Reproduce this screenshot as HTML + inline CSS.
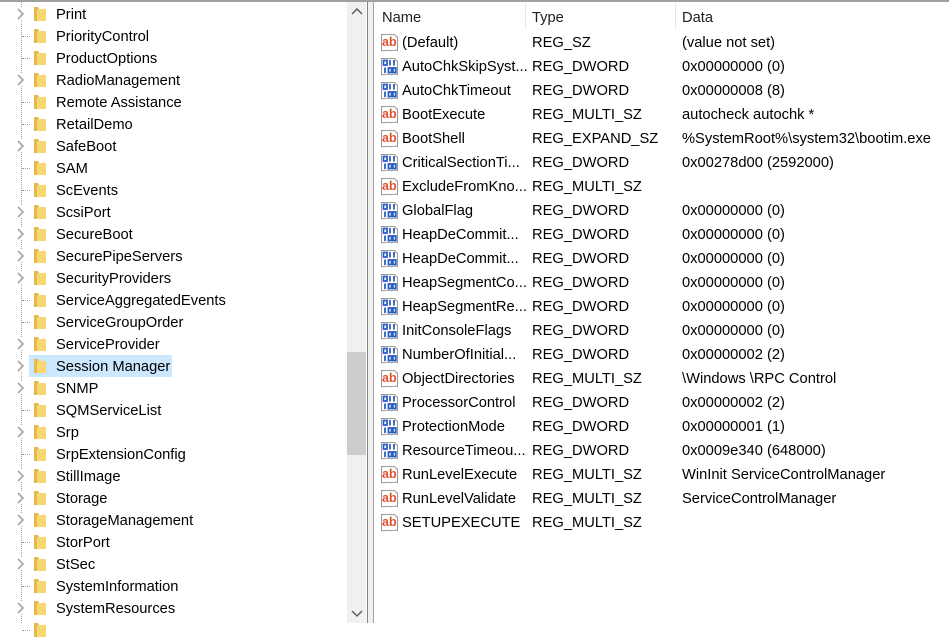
<!DOCTYPE html>
<html><head><meta charset="utf-8"><style>
*{margin:0;padding:0;box-sizing:border-box}
body{width:949px;height:623px;overflow:hidden;background:#fff;font-family:"Liberation Sans",sans-serif;font-size:14.7px;color:#000;position:relative}
.top{position:absolute;left:0;top:0;width:949px;height:2px;background:#a0a0a0}
.vl{position:absolute;left:21px;top:2px;height:621px;border-left:1px dotted #a0a0a0}
.tr{position:absolute;left:0;height:22px;width:346px}
.tr .h{position:absolute;left:22px;top:11px;width:8px;border-top:1px dotted #a0a0a0}
.tr .c{position:absolute;left:14px;top:5px;width:14px;height:12px;background:#fff}
.tr .f{position:absolute;left:33px;top:3px}
.tr .t{position:absolute;left:56px;top:4px;white-space:nowrap}
.sel{position:absolute;left:29px;width:143px;height:22px;background:#cce8ff}
.sb{position:absolute;left:347px;top:2px;width:19px;height:621px;background:#f0f0f0}
.thumb{position:absolute;left:347px;top:352px;width:19px;height:103px;background:#cdcdcd}
.spl{position:absolute;left:367px;top:2px;width:7px;height:621px;background:#f0f0f0;border-left:1px solid #828282;border-right:1px solid #a0a0a0}
.hd{position:absolute;top:3px;height:26px;color:#1e1e1e}
.dv{position:absolute;top:3px;width:1px;height:25px;background:#e5e5e5}
.r{position:absolute;left:375px;height:24px;width:574px;white-space:nowrap}
.r svg{position:absolute;left:5px;top:3px}
.r span{position:absolute;top:5px}
.n{left:27px}.ty{left:157px}.d{left:307px}
</style></head><body>
<div class="top"></div>
<div class="vl"></div>
<div class="sel" style="top:355px"></div>
<div id="tree"></div>
<div class="sb"></div>
<div class="thumb"></div>
<svg style="position:absolute;left:351px;top:8px" width="12" height="8"><path d="M1 6 L6 1 L11 6" fill="none" stroke="#606060" stroke-width="1.5"/></svg>
<svg style="position:absolute;left:351px;top:610px" width="12" height="8"><path d="M1 1 L6 6 L11 1" fill="none" stroke="#606060" stroke-width="1.5"/></svg>
<div class="spl"></div>
<div class="hd" style="left:382px;top:10px">Name</div>
<div class="dv" style="left:525px"></div>
<div class="hd" style="left:532px;top:10px">Type</div>
<div class="dv" style="left:675px"></div>
<div class="hd" style="left:682px;top:10px">Data</div>
<div id="rows"></div>
<script>
var items=[["Print",1],["PriorityControl",0],["ProductOptions",0],["RadioManagement",1],["Remote Assistance",0],["RetailDemo",0],["SafeBoot",1],["SAM",0],["ScEvents",0],["ScsiPort",1],["SecureBoot",1],["SecurePipeServers",1],["SecurityProviders",1],["ServiceAggregatedEvents",0],["ServiceGroupOrder",0],["ServiceProvider",1],["Session Manager",1],["SNMP",1],["SQMServiceList",0],["Srp",1],["SrpExtensionConfig",0],["StillImage",1],["Storage",1],["StorageManagement",1],["StorPort",0],["StSec",1],["SystemInformation",0],["SystemResources",1],["",0]];
var folder='<svg width="14" height="16"><path d="M1 1 h4 l1 1 v1 h-5z" fill="#e8b84a"/><rect x="1" y="3" width="12" height="12" fill="#f8d775"/><rect x="1" y="3" width="3" height="12" fill="#e8b84a"/></svg>';
var h='';
items.forEach(function(it,i){var y=3+i*22;
h+='<div class="tr" style="top:'+y+'px">'+(it[1]?'<div class="c"><svg width="14" height="12"><path d="M4 1 L9 6 L4 11" fill="none" stroke="#a6a6a6" stroke-width="1.6"/></svg></div>':'<div class="h"></div>')+'<div class="f">'+folder+'</div><div class="t">'+it[0]+'</div></div>';});
document.getElementById('tree').innerHTML=h;
var ab='<svg width="20" height="20"><path d="M1.5 1.5 h13 l3 3 v13 c-2 -1.5 -4 1 -8 0 c-3 -1 -5 1 -8 0z" fill="#fff" stroke="#9a9a9a"/><text x="2" y="13" font-family="Liberation Sans" font-weight="bold" font-size="12.5" fill="#e0502a">ab</text></svg>';
var bin='<svg width="20" height="20"><path d="M1.5 1.5 h13 l3 3 v13 c-2 -1.5 -4 1 -8 0 c-3 -1 -5 1 -8 0z" fill="#fff" stroke="#9a9a9a"/><g fill="none" stroke="#2a5fc0" stroke-width="1.8"><rect x="3.5" y="3.5" width="3.5" height="4.5"/><path d="M10 3 v5.5 M14 3 v5.5 M5 10.5 v5.5"/><rect x="8.5" y="11" width="3" height="4.5"/><rect x="13" y="11" width="2.8" height="4.5"/></g></svg>';
var rows=[["(Default)","REG_SZ","(value not set)",0],["AutoChkSkipSyst...","REG_DWORD","0x00000000 (0)",1],["AutoChkTimeout","REG_DWORD","0x00000008 (8)",1],["BootExecute","REG_MULTI_SZ","autocheck autochk *",0],["BootShell","REG_EXPAND_SZ","%SystemRoot%\\system32\\bootim.exe",0],["CriticalSectionTi...","REG_DWORD","0x00278d00 (2592000)",1],["ExcludeFromKno...","REG_MULTI_SZ","",0],["GlobalFlag","REG_DWORD","0x00000000 (0)",1],["HeapDeCommit...","REG_DWORD","0x00000000 (0)",1],["HeapDeCommit...","REG_DWORD","0x00000000 (0)",1],["HeapSegmentCo...","REG_DWORD","0x00000000 (0)",1],["HeapSegmentRe...","REG_DWORD","0x00000000 (0)",1],["InitConsoleFlags","REG_DWORD","0x00000000 (0)",1],["NumberOfInitial...","REG_DWORD","0x00000002 (2)",1],["ObjectDirectories","REG_MULTI_SZ","\\Windows \\RPC Control",0],["ProcessorControl","REG_DWORD","0x00000002 (2)",1],["ProtectionMode","REG_DWORD","0x00000001 (1)",1],["ResourceTimeou...","REG_DWORD","0x0009e340 (648000)",1],["RunLevelExecute","REG_MULTI_SZ","WinInit ServiceControlManager",0],["RunLevelValidate","REG_MULTI_SZ","ServiceControlManager",0],["SETUPEXECUTE","REG_MULTI_SZ","",0]];
h='';
rows.forEach(function(r,i){var y=30+i*24;
h+='<div class="r" style="top:'+y+'px">'+(r[3]?bin:ab)+'<span class="n">'+r[0]+'</span><span class="ty">'+r[1]+'</span><span class="d">'+r[2]+'</span></div>';});
document.getElementById('rows').innerHTML=h;
</script>
</body></html>
